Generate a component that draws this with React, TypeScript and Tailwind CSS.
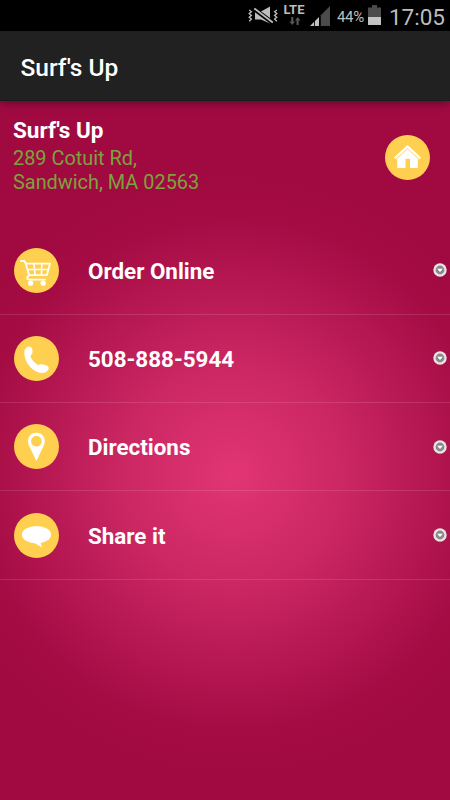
import React from 'react';

const HomeIcon = () => (
  <svg viewBox="0 0 45 45" className="size-[45px] shrink-0">
    <circle cx="22.5" cy="22.5" r="22.5" fill="#ffd04f" />
    <path d="M9.7 23.4 22.5 11.4 35.3 23.4" fill="none" stroke="#fff" strokeWidth="2.2" />
    <path d="M11.3 24.2 22.5 13.8 33.7 24.2H32.8V33H25V23.7H20.5V33H12.3V24.2Z" fill="#fff" />
    <path d="M11.2 24.6 22.5 14.1 33.8 24.6" fill="none" stroke="#ffe29a" strokeWidth="0.7" />
  </svg>
);

const CartIcon = () => (
  <svg viewBox="0 0 45 45" className="size-[45px] shrink-0">
    <circle cx="22.5" cy="22.5" r="22.5" fill="#ffd04f" />
    <g fill="none" stroke="#fff" strokeWidth="1.8" strokeLinecap="round" strokeLinejoin="round">
      <path d="M7 13H10.3L11.8 15.5 15.1 27.3Q12.7 29.2 13.4 30.8 14 31.7 16 31.7H31" />
      <path d="M12 15.6H36L33 26.8 15.1 27.2" />
      <path d="M13.3 21.5H34.4M20 15.6 21 27.2M27.8 15.6 27.4 27" strokeWidth="1.6" />
    </g>
    <circle cx="16.6" cy="35.2" r="2.6" fill="#fff" />
    <circle cx="29.2" cy="35.2" r="2.6" fill="#fff" />
  </svg>
);

const PhoneIcon = () => (
  <svg viewBox="0 0 45 45" className="size-[45px] shrink-0">
    <circle cx="22.5" cy="22.5" r="22.5" fill="#ffd04f" />
    <path
      d="M13.1 10.9C15.6 10 18 11.3 18.4 13.6L18.5 16.4C18.4 18 17 18.8 16.5 19.7C17 23.2 20.7 27 24.4 28.9C25.8 28.6 26.7 27.8 28.5 28.3L32.5 29.6C34.5 30.3 35.1 31.9 34.5 33.4C32.8 36.5 28.6 37.6 24.8 36.6C18.2 34.7 12.1 27.8 10.7 20.3C10 16.1 10.3 12.4 13.1 10.9Z"
      fill="#fff"
    />
  </svg>
);

const PinIcon = () => (
  <svg viewBox="0 0 45 45" className="size-[45px] shrink-0">
    <circle cx="22.5" cy="22.5" r="22.5" fill="#ffd04f" />
    <path
      fillRule="evenodd"
      d="M22.4 8.8C27.2 8.8 30.8 12.2 30.8 16.9C30.8 19.4 29.7 21.8 28.5 24.2L22.4 37 16.3 24.2C15 21.8 14 19.4 14 16.9C14 12.2 17.6 8.8 22.4 8.8ZM22.4 11.8A5.4 5.4 0 1 0 22.4 22.6A5.4 5.4 0 1 0 22.4 11.8Z"
      fill="#fff"
    />
  </svg>
);

const ChatIcon = () => (
  <svg viewBox="0 0 45 45" className="size-[45px] shrink-0">
    <circle cx="22.5" cy="22.5" r="22.5" fill="#ffd04f" />
    <ellipse cx="22.5" cy="21.7" rx="14.6" ry="8.7" fill="#fff" />
    <path d="M20.5 29.5C23 31.5 25 33.3 28.3 34.2C27 32.4 26.8 30.8 26.6 28.5Z" fill="#fff" />
  </svg>
);

const ArrowBadge = () => (
  <svg viewBox="0 0 14 14" className="mr-[3px] size-[14px] shrink-0">
    <circle cx="7" cy="7" r="6.7" fill="#e9e5e6" />
    <circle cx="7" cy="7" r="4.4" fill="#8a8a8a" />
    <path d="M4.2 5.8H9.8L7 9Z" fill="#fff" />
  </svg>
);

const StatusBar = () => (
  <div className="flex h-[31px] items-start justify-end bg-black text-[#bdbdbd]">
    <svg viewBox="0 0 30 22" className="mt-1.5 h-[22px] w-[30px]">
      <g fill="none" stroke="#bdbdbd" strokeWidth="1.3">
        <path d="M1.2 4 3.4 5.8 1.2 7.6 3.4 9.4 1.2 11.2 3.4 13 1.2 15.2" />
        <path d="M28.8 4 26.6 5.8 28.8 7.6 26.6 9.4 28.8 11.2 26.6 13 28.8 15.2" />
      </g>
      <path d="M7 5.5H13L22 0.4V17.6L13 13.5H7Z" fill="#bdbdbd" />
      <path d="M5.5 2.4 25 17" stroke="#000" strokeWidth="4.4" />
      <path d="M6.3 2.4 24.8 16.6" stroke="#bdbdbd" strokeWidth="1.9" />
    </svg>
    <div className="ml-[5px] flex w-[22px] flex-col items-center">
      <span className="mt-[3px] text-[13px] leading-[14px] font-bold">LTE</span>
      <svg viewBox="0 0 12 8" className="ml-0.5 h-2 w-3">
        <path d="M2.2 0H4.4V4.5H6L3.3 8 .4 4.5H2.2ZM7.5 8H9.7V3.5H11.6L8.7 0 6 3.5H7.5Z" fill="#555" />
      </svg>
    </div>
    <svg viewBox="0 0 20 20" className="mt-1.5 ml-[5px] size-5">
      <path d="M20 0V20H10.8V9.2Z" fill="#4b4b4b" />
      <path d="M0 20 4.2 15.8V20ZM5 20V15L9 11V20Z" fill="#c4c4c4" />
    </svg>
    <span className="mt-[7px] ml-[7px] w-7 text-[15px] leading-5 tracking-[-0.3px] whitespace-nowrap">44%</span>
    <svg viewBox="0 0 13 20" className="mt-[5px] ml-[3px] h-5 w-[13px]">
      <path d="M4 0H9V2.5H13V12H0V2.5H4Z" fill="#4b4b4b" />
      <path d="M0 12H13V20.5H0Z" fill="#c4c4c4" />
    </svg>
    <span className="mt-[3px] mr-[5px] ml-2 text-[22.5px] leading-7">17:05</span>
  </div>
);

const menuItems = [
  { label: 'Order Online', icon: CartIcon },
  { label: '508-888-5944', icon: PhoneIcon },
  { label: 'Directions', icon: PinIcon },
  { label: 'Share it', icon: ChatIcon },
];

const App = () => {
  return (
    <div className="flex h-[800px] w-[450px] flex-col overflow-hidden bg-[#a10a41] font-['Roboto',sans-serif]">
      <StatusBar />
      <header className="z-10 flex h-[70px] items-center border-b border-[#171d1d] bg-[#212121] pt-[5px] pl-[20.5px] shadow-[0_2px_9px_rgba(0,0,0,0.4)]">
        <h1 className="text-[24.5px] font-medium text-white">Surf's Up</h1>
      </header>

      <main className="flex-1 bg-[radial-gradient(circle_at_233px_374px,#e13673_0px,#cb2763_110px,#b31650_200px,#a50c44_255px,#a10a41_295px)]">
        <section className="flex h-[125.5px] justify-between pt-4 pr-5 pl-[13px]">
          <div>
            <h2 className="text-[22.5px] leading-[27px] font-bold text-white">Surf's Up</h2>
            <p className="mt-[3px] text-[19.9px] leading-[24px] text-[#7ba23c]">
              289 Cotuit Rd,
              <br />
              Sandwich, MA 02563
            </p>
          </div>
          <div className="pt-[18px]">
            <HomeIcon />
          </div>
        </section>

        <ul>
          {menuItems.map(({ label, icon: Icon }) => (
            <li
              key={label}
              className="flex h-[88.3px] items-center border-b border-white/12 pl-3.5"
            >
              <Icon />
              <span className="ml-[29px] flex-1 pt-[3px] text-[22.4px] font-bold text-white">{label}</span>
              <ArrowBadge />
            </li>
          ))}
        </ul>
      </main>
    </div>
  );
};

export default App;
